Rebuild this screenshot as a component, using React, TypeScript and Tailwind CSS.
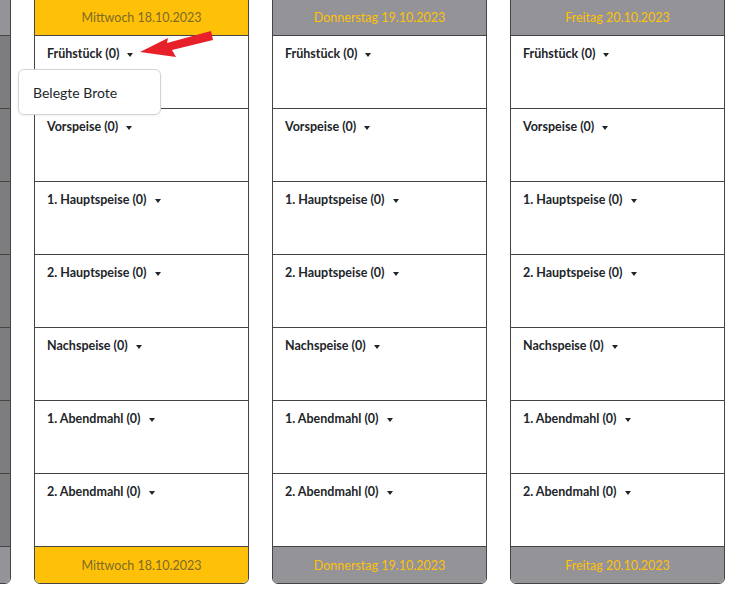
import React from "react";

const meals = [
  "Frühstück",
  "Vorspeise",
  "1. Hauptspeise",
  "2. Hauptspeise",
  "Nachspeise",
  "1. Abendmahl",
  "2. Abendmahl",
];

type Day = { label: string; today?: boolean; past?: boolean };

const days: Day[] = [
  { label: "Dienstag 17.10.2023", past: true },
  { label: "Mittwoch 18.10.2023", today: true },
  { label: "Donnerstag 19.10.2023" },
  { label: "Freitag 20.10.2023" },
];

function Caret() {
  return (
    <span className="ml-[8px] inline-block h-0 w-0 border-x-[3.5px] border-t-[4px] border-x-transparent border-t-[#212529] align-middle" />
  );
}

function DayColumn({ day }: { day: Day }) {
  const head = day.today
    ? "bg-[#ffc107] text-[#7d6a2a]"
    : "bg-[#939398] text-[#ffc107]";
  const body = day.past ? "bg-[#7d7d7f]" : "bg-white";
  // the past column is scrolled mostly out of view, its labels are hidden
  const label = day.past ? "" : day.label;
  return (
    <div className="mt-[-1px] flex w-[215px] shrink-0 flex-col overflow-hidden rounded-b-[6px] border border-[#444]">
      <div className={`flex h-[36px] items-center justify-center border-b border-[#444] pt-[2px] text-[12.5px] ${head}`}>
        {label}
      </div>
      {meals.map((m) => (
        <div key={m} className={`h-[73px] border-b border-[#444] pl-[12px] pt-[4px] ${body}`}>
          {!day.past && (
            <span className="text-[12.5px] font-bold text-[#212529]">
              {m} (0)
              <Caret />
            </span>
          )}
        </div>
      ))}
      <div className={`flex h-[36px] items-center justify-center pt-[2px] text-[12.5px] ${head}`}>
        {label}
      </div>
    </div>
  );
}

export default function App() {
  return (
    <div
      className="relative h-[595px] w-[749px] overflow-hidden bg-white"
      style={{ fontFamily: 'Lato, "Noto Sans", sans-serif' }}
    >
      <div className="ml-[-204px] flex gap-[23px]">
        {days.map((d) => (
          <DayColumn key={d.label} day={d} />
        ))}
      </div>

      {/* open dropdown */}
      <div className="absolute left-[18px] top-[69px] flex h-[46px] w-[143px] items-center rounded-[6px] border border-[#d3d3d3] bg-white pl-[14px] text-[14px] text-[#212529] shadow-[0_1px_3px_rgba(0,0,0,0.06)]">
        Belegte Brote
      </div>

      {/* red pointer arrow */}
      <svg className="absolute left-0 top-0" width="749" height="595">
        <polygon
          points="140,52 168,38 167,43 211,31 213,40 172,50 176,57"
          fill="#e8202a"
        />
      </svg>
    </div>
  );
}
